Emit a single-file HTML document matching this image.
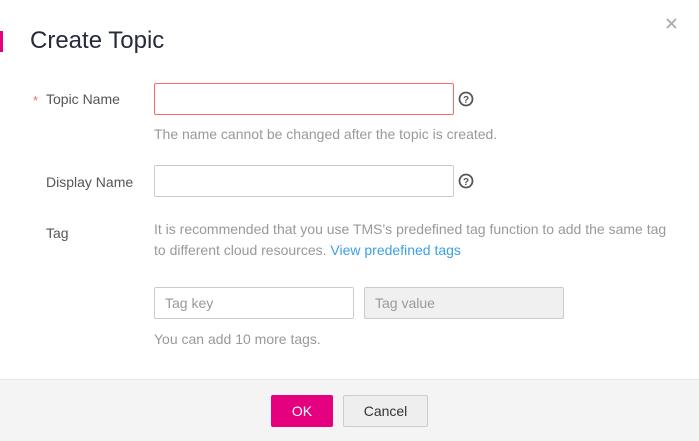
<!DOCTYPE html>
<html><head><style>
body{margin:0;width:699px;height:440px;background:#fff;font-family:"Liberation Sans",sans-serif;position:relative;overflow:hidden;}
.a{position:absolute;}
.lbl{font-size:14px;color:#555;}
.hint{font-size:14px;color:#999;}
.inp{position:absolute;box-sizing:border-box;border:1px solid #ccc;background:#fff;border-radius:2px;font-size:14px;color:#999;padding-left:10px;line-height:30px;}
</style></head><body>
<div class="a" style="left:0;top:31px;width:3px;height:21px;background:#e4007f"></div>
<div class="a" style="left:30px;top:27px;font-size:24px;color:#252b3a">Create Topic</div>
<svg class="a" style="left:666px;top:18px" width="11" height="11"><path d="M1 1L10 10M10 1L1 10" stroke="#aaa" stroke-width="1.8"/></svg>
<div class="a" style="left:33px;top:93px;font-size:13px;color:#f66">*</div>
<div class="a lbl" style="left:46px;top:91px">Topic Name</div>
<div class="inp" style="left:154px;top:83px;width:300px;height:32px;border-color:#f66"></div>
<svg class="a" style="left:458px;top:91px" width="16" height="16"><circle cx="8" cy="8" r="6.5" fill="none" stroke="#555" stroke-width="1.8"/><text x="8" y="12" font-size="10" font-weight="bold" text-anchor="middle" fill="#555" font-family="Liberation Sans">?</text></svg>
<div class="a hint" style="left:154px;top:126px">The name cannot be changed after the topic is created.</div>
<div class="a lbl" style="left:46px;top:174px">Display Name</div>
<div class="inp" style="left:154px;top:165px;width:300px;height:32px"></div>
<svg class="a" style="left:458px;top:173px" width="16" height="16"><circle cx="8" cy="8" r="6.5" fill="none" stroke="#555" stroke-width="1.8"/><text x="8" y="12" font-size="10" font-weight="bold" text-anchor="middle" fill="#555" font-family="Liberation Sans">?</text></svg>
<div class="a lbl" style="left:46px;top:225px">Tag</div>
<div class="a hint" style="left:154px;top:219px;line-height:21px;width:540px">It is recommended that you use TMS's predefined tag function to add the same tag<br>to different cloud resources. <span style="color:#3ba0e6">View predefined tags</span></div>
<div class="inp" style="left:154px;top:287px;width:200px;height:32px">Tag key</div>
<div class="inp" style="left:364px;top:287px;width:200px;height:32px;background:#f0f0f0">Tag value</div>
<div class="a hint" style="left:154px;top:331px">You can add 10 more tags.</div>
<div class="a" style="left:0;top:379px;width:699px;height:61px;background:#f4f4f4;border-top:1px solid #e8e8e8"></div>
<div class="a" style="left:271px;top:395px;width:62px;height:32px;background:#e4007f;border-radius:2px;color:#fff;font-size:14px;text-align:center;line-height:32px">OK</div>
<div class="a" style="left:343px;top:395px;width:85px;height:32px;box-sizing:border-box;background:#eee;border:1px solid #ccc;border-radius:2px;color:#333;font-size:14px;text-align:center;line-height:30px">Cancel</div>
</body></html>
